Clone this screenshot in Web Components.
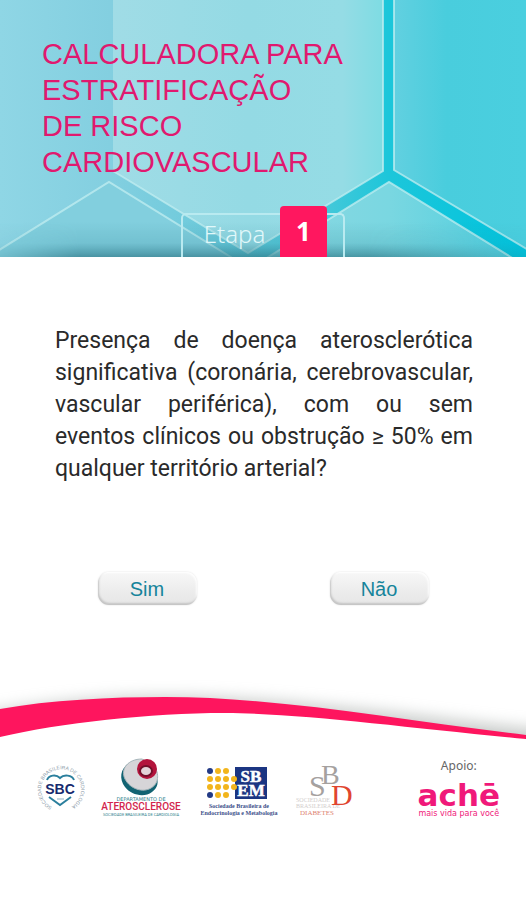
<!DOCTYPE html>
<html lang="pt-BR">
<head>
<meta charset="utf-8">
<meta name="viewport" content="width=device-width, initial-scale=1">
<title>Calculadora para estratificação de risco cardiovascular</title>
<style>
  html, body { height: 100%; }
  body { margin: 0; background: #fff; }
</style>
</head>
<body>
<risk-app></risk-app>

<script>
function define(name, html) {
  const template = document.createElement('template');
  template.innerHTML = html;
  customElements.define(name, class extends HTMLElement {
    constructor() {
      super();
      this.attachShadow({ mode: 'open' }).append(template.content.cloneNode(true));
    }
  });
}

/* Honeycomb header with a title and a step marker */
define('app-header', `
<style>
  :host { display: flex; flex-direction: column; gap: 26px; position: relative; overflow: hidden; padding: 36px 42px 0; color: #e0196f; }
  svg { position: absolute; inset: 0; width: 100%; height: 100%; z-index: 0; }
  h1 { position: relative; margin: 0; font: 400 29px/36px "Liberation Sans", Arial, sans-serif; }
  ::slotted([slot=step]) { position: relative; align-self: center; }
</style>
<svg viewBox="0 0 526 257" preserveAspectRatio="xMidYMax slice" aria-hidden="true">
  <defs>
    <linearGradient id="base" gradientUnits="userSpaceOnUse" x1="0" x2="526" y1="0" y2="0">
      <stop offset="0" stop-color="#8fd6e5"/><stop offset=".21" stop-color="#83cfe0"/>
      <stop offset=".4" stop-color="#6ccadb"/><stop offset=".62" stop-color="#45c8d9"/>
      <stop offset=".74" stop-color="#1cc6da"/><stop offset="1" stop-color="#00c4de"/>
    </linearGradient>
    <linearGradient id="mid" gradientUnits="userSpaceOnUse" x1="113" x2="383" y1="0" y2="0">
      <stop offset="0" stop-color="#a0dce6"/><stop offset=".5" stop-color="#94dae4"/>
      <stop offset=".85" stop-color="#95dce5"/><stop offset="1" stop-color="#7edce3"/>
    </linearGradient>
    <linearGradient id="right" gradientUnits="userSpaceOnUse" x1="394" x2="526" y1="0" y2="0">
      <stop offset="0" stop-color="#62d0e0"/><stop offset=".4" stop-color="#49cddd"/><stop offset="1" stop-color="#4acfdf"/>
    </linearGradient>
    <linearGradient id="lowR" gradientUnits="userSpaceOnUse" x1="267" x2="510" y1="0" y2="0">
      <stop offset="0" stop-color="#8ad7e2"/><stop offset=".5" stop-color="#7ad7e1"/><stop offset="1" stop-color="#50cfdf"/>
    </linearGradient>
    <linearGradient id="shade" x1="0" x2="0" y1="0" y2="1">
      <stop offset="0" stop-color="#2c7f91" stop-opacity="0"/><stop offset=".6" stop-color="#2c7f91" stop-opacity=".17"/>
      <stop offset="1" stop-color="#286f7e" stop-opacity=".62"/>
    </linearGradient>
    <linearGradient id="shadeX" x1="0" x2="1" y1="0" y2="0">
      <stop offset="0" stop-color="#fff" stop-opacity=".3"/><stop offset=".15" stop-color="#fff"/>
      <stop offset=".7" stop-color="#fff"/><stop offset="1" stop-color="#fff" stop-opacity=".25"/>
    </linearGradient>
    <mask id="fade"><rect y="215" width="526" height="42" fill="url(#shadeX)"/></mask>
  </defs>
  <rect width="526" height="257" fill="url(#base)"/>
  <path d="M113-4V171L248 253L383 171V-4Z" fill="url(#mid)"/>
  <path d="M394-4V170L530 251V-4Z" fill="url(#right)"/>
  <path d="M-4 252L109 182L234 259H-4Z" fill="#82cfde"/>
  <path d="M265 259L389 182L514 259Z" fill="url(#lowR)"/>
  <g fill="none" stroke="#c1edf0" stroke-width="2" stroke-opacity=".75">
    <path d="M113 171L248 253L383 171V-4"/>
    <path d="M394-4V170L530 251"/>
    <path d="M-4 252L109 182L234 259"/>
    <path d="M265 259L389 182L514 259"/>
  </g>
  <rect y="222" width="526" height="35" fill="url(#shade)" mask="url(#fade)"/>
</svg>
<h1><slot></slot></h1>
<slot name="step"></slot>`);

define('step-badge', `
<style>
  :host { display: flex; align-items: flex-end; width: 164px; height: 51px; }
  .frame { flex: 1; box-sizing: border-box; display: flex; height: 44px; padding: 0 16px 0 6px; border: 2px solid #b9eaf0; border-bottom: 0; border-radius: 5px 5px 0 0; }
  .label { flex: 1; text-align: center; font: 300 24px/38px "Noto Sans", sans-serif; color: #e1f8fa; }
  .num { width: 47px; height: 51px; margin-top: -9px; border-radius: 4px 4px 0 0; background: #ff175f; color: #fff; text-align: center; font: 700 26px/50px "Noto Sans", sans-serif; }
</style>
<div class="frame"><span class="label"><slot></slot></span><span class="num"><slot name="number"></slot></span></div>`);

define('question-text', `
<style>
  :host { display: block; }
  p { margin: 0; font: 400 23px/32px Roboto, sans-serif; color: #2a2a2a; text-align: justify; }
</style>
<p><slot></slot></p>`);

define('answer-button', `
<style>
  :host { display: block; }
  button { display: block; width: 99px; height: 33px; padding: 0; border: 0; border-radius: 11px; color: #16849b; font: 400 20px/32px "Liberation Sans", Arial, sans-serif;
    background: linear-gradient(#f7f7f7, #ececec 60%, #e6e6e6); box-shadow: inset 1px -2px 2px #c4c4c4, inset -1px 1px 2px #fff, 0 0 2px #ddd; cursor: pointer; }
</style>
<button type="button"><slot></slot></button>`);

define('wave-divider', `
<style>
  :host { display: block; height: 75px; }
  svg { display: block; width: 100%; height: 100%; }
</style>
<svg viewBox="0 0 526 75" preserveAspectRatio="none" aria-hidden="true">
  <defs>
    <filter id="soft" x="-20%" y="-60%" width="140%" height="220%"><feGaussianBlur stdDeviation="8"/></filter>
  </defs>
  <path d="M-40 48C50 31 110 27 165 27C280 27 400 45 566 63V95H-40Z" fill="#8d9490" opacity=".5" filter="url(#soft)"/>
  <path d="M0 39C50 30 110 27 165 27C280 27 400 50 526 65V75H0Z" fill="#fe155e"/>
  <path d="M0 67C60 53 150 43 225 43C300 43 410 58 526 69V75H0Z" fill="#fff"/>
</svg>`);

define('sbc-logo', `
<style>:host { display: block; } svg { display: block; width: 50px; height: 60px; } text { font-family: "Liberation Sans", Arial, sans-serif; }</style>
<svg viewBox="0 0 50 60" role="img" aria-label="SBC">
  <defs><path id="ring" d="M17 50A20 20 0 1 1 29 52"/></defs>
  <text font-size="5" fill="#8b9aa8"><textPath href="#ring">SOCIEDADE BRASILEIRA DE CARDIOLOGIA</textPath></text>
  <path d="M12 23C14 18 21 17 25 21C29 17 37 18 39 23" fill="none" stroke="#2b7f9d" stroke-width="2"/>
  <path d="M14 40L25 48L36 40" fill="none" stroke="#2b7f9d" stroke-width="2"/>
  <text x="25" y="37" text-anchor="middle" font-size="14" font-weight="700" fill="#162a6e">SBC</text>
  <path d="M22 42H29" stroke="#8fb1c4"/>
</svg>`);

define('aterosclerose-logo', `
<style>:host { display: block; } svg { display: block; width: 80px; height: 60px; overflow: visible; } text { font-family: Roboto, sans-serif; text-anchor: middle; }</style>
<svg viewBox="0 0 80 60" role="img" aria-label="Departamento de Aterosclerose">
  <path d="M28 6C19 12 18 22 24 30C30 38 43 41 51 35C57 31 58 24 55 19Z" fill="#126372"/>
  <path d="M41 2C27 2 19 12 24 22C29 32 42 36 50 31C59 26 58 14 52 8Z" fill="#d6d5d8" stroke="#a7b6bb"/>
  <circle cx="46" cy="12" r="10" fill="#b3143c"/>
  <ellipse cx="45" cy="14" rx="6" ry="5" fill="#e3d3d8" stroke="#740f2a" stroke-width="2"/>
  <text x="40" y="44" font-size="5" style="font-family:'DejaVu Sans',sans-serif" fill="#2f7f8d">DEPARTAMENTO DE</text>
  <text x="40" y="53" font-size="10" font-weight="500" fill="#d2254d">ATEROSCLEROSE</text>
  <text x="40" y="59" font-size="4" fill="#2f7f8d">SOCIEDADE BRASILEIRA DE CARDIOLOGIA</text>
</svg>`);

define('sbem-logo', `
<style>:host { display: block; } svg { display: block; width: 80px; height: 60px; overflow: visible; } text { font-family: "Liberation Serif", serif; font-weight: 700; text-anchor: middle; }</style>
<svg viewBox="0 0 80 60" role="img" aria-label="SBEM">
  <rect x="38" y="10" width="32" height="32" fill="#1b3582"/>
  <g fill="#233a85"><circle cx="13" cy="14" r="3"/><circle cx="13" cy="38" r="3"/></g>
  <g fill="#f2b51c">
    <circle cx="13" cy="22" r="3"/><circle cx="13" cy="30" r="3"/>
    <circle cx="21" cy="14" r="3"/><circle cx="21" cy="22" r="3"/><circle cx="21" cy="30" r="3"/><circle cx="21" cy="38" r="3"/>
    <circle cx="29" cy="14" r="3"/><circle cx="29" cy="22" r="3"/><circle cx="29" cy="30" r="3"/><circle cx="29" cy="38" r="3"/>
    <circle cx="37" cy="22" r="3"/><circle cx="37" cy="30" r="3"/>
  </g>
  <g fill="#fff" stroke="#fff" stroke-width=".5" font-size="17"><text x="54" y="25">SB</text><text x="54" y="39">EM</text></g>
  <g font-size="6" fill="#3c4f8a"><text x="42" y="51">Sociedade Brasileira de</text><text x="42" y="58">Endocrinologia e Metabologia</text></g>
</svg>`);

define('sbd-logo', `
<style>:host { display: block; } svg { display: block; width: 60px; height: 60px; } text { font-family: "Liberation Serif", serif; }</style>
<svg viewBox="0 0 60 60" role="img" aria-label="Sociedade Brasileira de Diabetes">
  <g fill="#d2cecd" font-size="6"><text x="3" y="45">SOCIEDADE</text><text x="3" y="51">BRASILEIRA DE</text></g>
  <text x="28" y="27" font-size="28" fill="#a5a19f">B</text>
  <text x="16" y="39" font-size="30" fill="#a5a19f">S</text>
  <text x="38" y="48" font-size="30" fill="#e0452f">D</text>
  <text x="7" y="58" font-size="7" fill="#dd8170">DIABETES</text>
</svg>`);

define('ache-logo', `
<style>
  :host { display: flex; flex-direction: column; align-items: center; color: #f0197a; }
  .apoio { font: 400 12px/18px "Noto Sans", sans-serif; color: #666; }
  .brand { margin-top: 6px; font: 700 31px/28px "DejaVu Sans", sans-serif; }
  .tag { font: 400 8px/9px "DejaVu Sans", sans-serif; white-space: nowrap; }
</style>
<span class="apoio">Apoio:</span><span class="brand">achē</span><span class="tag">mais vida para você</span>`);

define('partner-row', `
<style>
  :host { display: flex; justify-content: space-between; align-items: flex-start; padding: 0 26px 0 35px; }
  .group { display: flex; gap: 16px; }
</style>
<div class="group"><sbc-logo></sbc-logo><aterosclerose-logo></aterosclerose-logo><sbem-logo></sbem-logo><sbd-logo></sbd-logo></div>
<ache-logo></ache-logo>`);

define('risk-app', `
<style>
  :host { display: flex; flex-direction: column; min-height: 100%; background: #fff; }
  main { display: flex; flex-direction: column; gap: 87px; padding: 68px 53px 0 55px; }
  .answers { display: grid; grid-template-columns: 1fr 1fr; justify-items: center; margin: 0 -22px 0 -24px; }
  footer { display: flex; flex-direction: column; gap: 12px; margin-top: 65px; }
</style>
<app-header>CALCULADORA PARA<br>ESTRATIFICAÇÃO<br>DE RISCO<br>CARDIOVASCULAR<step-badge slot="step">Etapa<span slot="number">1</span></step-badge></app-header>
<main>
  <question-text>Presença de doença aterosclerótica significativa (coronária, cerebrovascular, vascular periférica), com ou sem eventos clínicos ou obstrução ≥ 50% em qualquer território arterial?</question-text>
  <div class="answers"><answer-button>Sim</answer-button><answer-button>Não</answer-button></div>
</main>
<footer><wave-divider></wave-divider><partner-row></partner-row></footer>`);
</script>
</body>
</html>
